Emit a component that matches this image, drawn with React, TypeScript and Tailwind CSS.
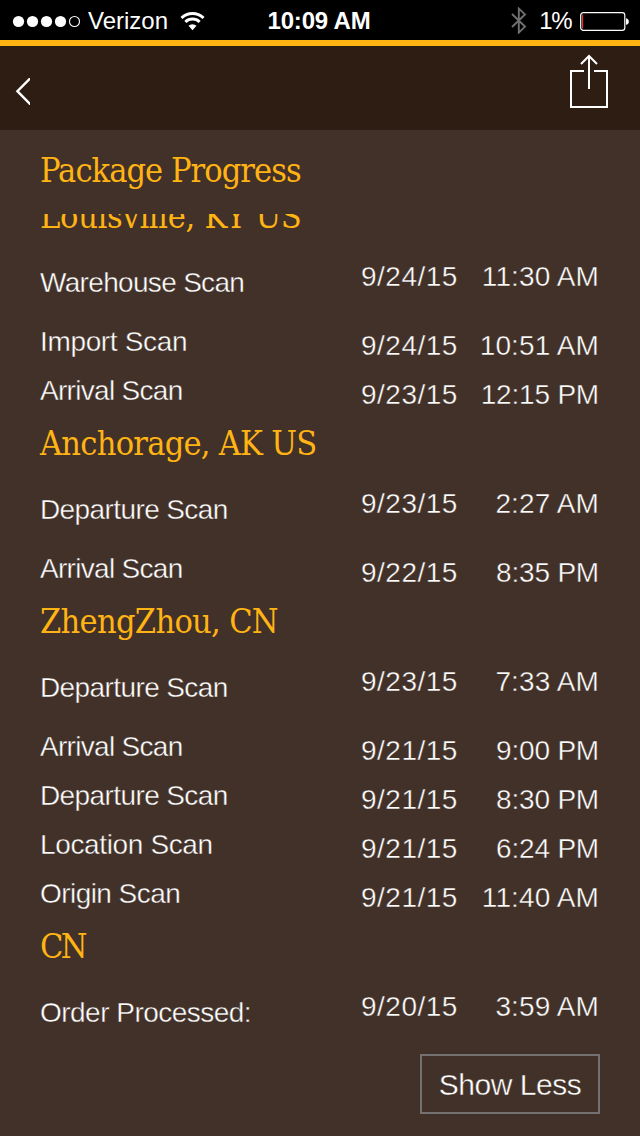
type Scan = { label: string; tracking: string; date: string; time: string };
type Stop = { place: string; tracking: string; scans: Scan[] };

const WAREHOUSE = { label: 'Warehouse Scan', tracking: 'tracking-[-0.68px]' };
const IMPORT = { label: 'Import Scan', tracking: 'tracking-[-0.35px]' };
const ARRIVAL = { label: 'Arrival Scan', tracking: 'tracking-[-0.7px]' };
const DEPARTURE = { label: 'Departure Scan', tracking: 'tracking-[-0.6px]' };
const LOCATION = { label: 'Location Scan', tracking: 'tracking-[-0.36px]' };
const ORIGIN = { label: 'Origin Scan', tracking: 'tracking-[-0.55px]' };
const ORDER = { label: 'Order Processed:', tracking: 'tracking-[-0.52px]' };

const stops: Stop[] = [
  {
    place: 'Louisville, KY US',
    tracking: 'tracking-[-0.3px]',
    scans: [
      { ...WAREHOUSE, date: '9/24/15', time: '11:30 AM' },
      { ...IMPORT, date: '9/24/15', time: '10:51 AM' },
      { ...ARRIVAL, date: '9/23/15', time: '12:15 PM' },
    ],
  },
  {
    place: 'Anchorage, AK US',
    tracking: 'tracking-[-0.75px]',
    scans: [
      { ...DEPARTURE, date: '9/23/15', time: '2:27 AM' },
      { ...ARRIVAL, date: '9/22/15', time: '8:35 PM' },
    ],
  },
  {
    place: 'ZhengZhou, CN',
    tracking: 'tracking-[-0.7px]',
    scans: [
      { ...DEPARTURE, date: '9/23/15', time: '7:33 AM' },
      { ...ARRIVAL, date: '9/21/15', time: '9:00 PM' },
      { ...DEPARTURE, date: '9/21/15', time: '8:30 PM' },
      { ...LOCATION, date: '9/21/15', time: '6:24 PM' },
      { ...ORIGIN, date: '9/21/15', time: '11:40 AM' },
    ],
  },
  {
    place: 'CN',
    tracking: 'tracking-[-2.6px]',
    scans: [{ ...ORDER, date: '9/20/15', time: '3:59 AM' }],
  },
];

function StatusBar() {
  return (
    <div className="grid h-[40px] grid-cols-[1fr_auto_1fr] items-center bg-black text-[24px] leading-[40px] text-white">
      <div className="flex items-center pl-[12px]">
        <svg width="70" height="14" viewBox="0 0 70 14" fill="#fff">
          <circle cx="6.5" cy="7.5" r="5.6" />
          <circle cx="20.5" cy="7.5" r="5.6" />
          <circle cx="34.5" cy="7.5" r="5.6" />
          <circle cx="48.5" cy="7.5" r="5.6" />
          <circle cx="62.5" cy="7.5" r="5" fill="none" stroke="#fff" strokeWidth="1.1" />
        </svg>
        <span className="ml-[6px] pt-[1px]">Verizon</span>
        <svg className="ml-[12px]" width="25" height="20" viewBox="0 0 25 20" fill="none" stroke="#fff" strokeWidth="3">
          <path d="M1.500 7a15.600 15.600 0 0 1 22 0" />
          <path d="M5.400 11a10.200 10.200 0 0 1 14.200 0" />
          <path d="M12.500 19.200l-4-4.400a5.800 5.800 0 0 1 8 0z" fill="#fff" stroke="none" />
        </svg>
      </div>
      <span className="pt-[1px] pr-[2px] font-bold tracking-[-0.2px]">10:09 AM</span>
      <div className="flex items-center justify-end pr-[10px]">
        <svg width="16" height="27" viewBox="0 0 16 27" fill="none" stroke="#707070" strokeWidth="1.900">
          <path d="M1 7l13 12.600-6.200 6V1.600L14 7.400 1 20" />
        </svg>
        <span className="ml-[12px] pt-[1px] tracking-[-1.500px]">1%</span>
        <svg className="ml-[9px]" width="50" height="20" viewBox="0 0 50 20" fill="none">
          <rect x="0.700" y="1.700" width="44.100" height="17.600" rx="2.600" stroke="#fff" strokeWidth="1.200" />
          <path d="M2.600 3.500v14" stroke="#e0342b" strokeWidth="1.200" />
          <path d="M46 7.200c3.800.6 3.800 6 0 6.600z" fill="#fff" />
        </svg>
      </div>
    </div>
  );
}

function NavBar() {
  return (
    <div className="flex h-[90px] items-start justify-between border-t-[6px] border-[#ffb414] bg-[#2e1d13]">
      <button aria-label="Back" className="pt-[32px] pl-[15px]">
        <svg width="15" height="27" viewBox="0 0 15 27" fill="none" stroke="#fff" strokeWidth="2.400">
          <path d="M16-.5L2.400 13.200 16 27" />
        </svg>
      </button>
      <button aria-label="Share" className="pt-[8px] pr-[32px]">
        <svg width="38" height="54" viewBox="0 0 38 54" fill="none" stroke="#fff" strokeWidth="2">
          <path d="M14 17H1v36h36V17H24M19 35V2.500M11 10l8-8 8 8" />
        </svg>
      </button>
    </div>
  );
}

function StopSection({ stop }: { stop: Stop }) {
  return (
    <section>
      <h2 className={`h-[56px] font-['DejaVu_Serif_Condensed','DejaVu_Serif',serif] text-[34px] leading-[58px] text-[#ffb414] ${stop.tracking}`}>
        {stop.place}
      </h2>
      {stop.scans.map((scan, i) => (
        <div
          key={i}
          className={`flex text-[28px] leading-[32px] text-white [-webkit-text-stroke:0.4px_#423129] ${i === 0 ? 'h-[73px]' : 'h-[49px]'}`}
        >
          <span className={`w-[321px] ${i === 0 ? 'pt-[24px]' : 'pt-[10px]'} ${scan.tracking}`}>{scan.label}</span>
          <span className={`w-[100px] tracking-[0.5px] ${i === 0 ? 'pt-[18px]' : 'pt-[14px]'}`}>{scan.date}</span>
          <span
            className={`w-[138px] text-right ${scan.time.endsWith('PM') ? 'tracking-[-0.2px]' : 'tracking-[0.12px]'} ${i === 0 ? 'pt-[18px]' : 'pt-[14px]'}`}
          >
            {scan.time}
          </span>
        </div>
      ))}
    </section>
  );
}

export default function App() {
  return (
    <div className="flex h-[1136px] w-[640px] flex-col overflow-hidden bg-[#423129] font-['Liberation_Sans',Arial,sans-serif]">
      <StatusBar />
      <NavBar />
      <h1 className="h-[84px] pl-[40px] font-['DejaVu_Serif_Condensed','DejaVu_Serif',serif] text-[34px] leading-[80px] tracking-[-0.95px] text-[#ffb414]">
        Package Progress
      </h1>
      <main className="flex-1 overflow-hidden px-[40px] whitespace-nowrap">
        <div className="-mt-[27px]">
          {stops.map((stop) => (
            <StopSection key={stop.place} stop={stop} />
          ))}
        </div>
        <div className="mt-[8px] flex justify-end">
          <button className="h-[60px] w-[180px] border-2 border-[#757170] text-[30px] leading-[58px] tracking-[-0.45px] text-white [-webkit-text-stroke:0.4px_#423129]">
            Show Less
          </button>
        </div>
      </main>
    </div>
  );
}
